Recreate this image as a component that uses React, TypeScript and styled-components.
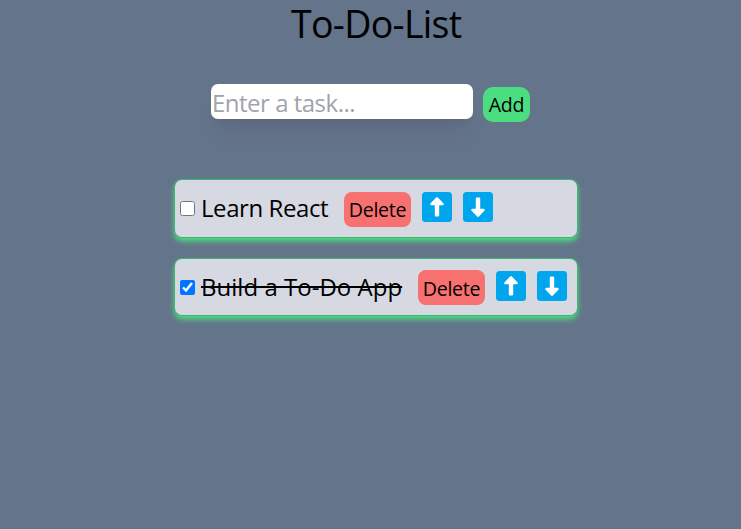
import React, { useState } from "react";
import styled, { createGlobalStyle } from "styled-components";

const GlobalStyle = createGlobalStyle`
  *, *::before, *::after { box-sizing: border-box; }
  html, body { margin: 0; min-height: 100vh; background: #64748b; }
  body { font-family: "Segoe UI", "Open Sans", "Noto Sans", sans-serif; color: #000; }
  button, input { font: inherit; color: inherit; border: 0; margin: 0; padding: 0; }
`;

const Page = styled.main`
  display: flex;
  flex-direction: column;
  width: 741px;
  height: 529px;
`;

const Title = styled.h1`
  margin: 0 0 0 291px;
  height: 84px;
  font-size: 37.5px;
  font-weight: 400;
  line-height: 48px;
  letter-spacing: -0.7px;
  white-space: nowrap;
`;

const EntryRow = styled.form`
  display: flex;
  align-items: flex-start;
  gap: 10px;
  height: 96px;
  padding-left: 211px;
`;

const TaskInput = styled.input`
  width: 262px;
  height: 35px;
  padding: 1px 1px 0;
  font-size: 24px;
  letter-spacing: -0.5px;
  border-radius: 7px;
  background: #fff;
  outline: none;
  box-shadow: 0 20px 25px -5px rgba(0, 0, 0, 0.06), 0 8px 10px -6px rgba(0, 0, 0, 0.08);
  &::placeholder { color: #a0a4aa; opacity: 1; }
`;

const Button = styled.button<{ $tone: "add" | "delete"; $drop?: number }>`
  flex: none;
  width: ${(p) => (p.$tone === "add" ? 47 : 67)}px;
  height: 35px;
  padding-top: ${(p) => p.$drop ?? 0}px;
  margin-top: ${(p) => (p.$tone === "add" ? 3 : 0)}px;
  font-size: 19.6px;
  line-height: ${(p) => 35 - (p.$drop ?? 0)}px;
  letter-spacing: -0.25px;
  white-space: nowrap;
  border-radius: ${(p) => (p.$tone === "add" ? 10 : 8)}px;
  background: ${(p) => (p.$tone === "add" ? "#4ade80" : "#f87171")};
`;

const List = styled.ul`
  display: flex;
  flex-direction: column;
  gap: 22px;
  margin: 0 0 0 175px;
  padding: 0;
  width: 402px;
  list-style: none;
`;

const Card = styled.li<{ $done: boolean }>`
  display: flex;
  align-items: flex-start;
  height: ${(p) => (p.$done ? 56 : 57)}px;
  padding: ${(p) => (p.$done ? 11 : 12)}px 0 0 5px;
  border-radius: 7px;
  background: #d6d9e2;
  box-shadow: 0 0 0 1px #3fb574, 0 4px 6px 0 #4ade80, 0 2px 4px -1px #4ade80;
`;

const Check = styled.input<{ $done: boolean }>`
  flex: none;
  width: 15px;
  height: 15px;
  margin: ${(p) => (p.$done ? 10 : 9)}px 6px 0 0;
`;

const Label = styled.span<{ $done: boolean; $width: number }>`
  flex: none;
  width: ${(p) => p.$width}px;
  margin-right: 16px;
  font-size: 24px;
  line-height: ${(p) => (p.$done ? 34 : 32)}px;
  letter-spacing: ${(p) => (p.$done ? 0.02 : -0.42)}px;
  white-space: nowrap;
  text-decoration: ${(p) => (p.$done ? "line-through" : "none")};
  text-decoration-thickness: 2px;
`;

const Moves = styled.div<{ $done: boolean }>`
  display: flex;
  gap: 11px;
  margin: ${(p) => (p.$done ? 0.7 : 0)}px 0 0 10.5px;
`;

const MoveButton = styled.button`
  width: 30px;
  height: 30px;
  background: none;
  svg { display: block; }
`;

function Arrow({ down = false }: { down?: boolean }) {
  return (
    <svg width="30" height="30" viewBox="0 0 30 30">
      <rect width="30" height="30" rx="3.5" fill="#00a6ed" />
      <path
        transform={down ? "rotate(180 15 15)" : undefined}
        d="M14.1 5.500a1.300 1.300 0 0 1 1.800 0l5.500 5.700c.8.900.3 2.100-.9 2.100H17.200v10.100c0 .7-.5 1.200-1.200 1.200h-2c-.7 0-1.200-.5-1.200-1.200v-10.100H9.500c-1.200 0-1.700-1.200-.9-2.100z"
        fill="#fff"
      />
    </svg>
  );
}

const initialTasks = [
  { text: "Learn React", done: false, width: 127 },
  { text: "Build a To-Do App", done: true, width: 201 },
];

export default function App() {
  const [tasks, setTasks] = useState(initialTasks);
  const toggle = (text: string) =>
    setTasks(tasks.map((t) => (t.text === text ? { ...t, done: !t.done } : t)));
  return (
    <Page>
      <GlobalStyle />
      <Title>To-Do-List</Title>
      <EntryRow onSubmit={(e) => e.preventDefault()}>
        <TaskInput placeholder="Enter a task..." />
        <Button $tone="add">Add</Button>
      </EntryRow>
      <List>
        {tasks.map((t) => (
          <Card key={t.text} $done={t.done}>
            <Check type="checkbox" $done={t.done} checked={t.done} onChange={() => toggle(t.text)} />
            <Label $done={t.done} $width={t.width}>{t.text}</Label>
            <Button $tone="delete" type="button" $drop={t.done ? 2 : 0}>Delete</Button>
            <Moves $done={t.done}>
              <MoveButton type="button" aria-label="Move up"><Arrow /></MoveButton>
              <MoveButton type="button" aria-label="Move down"><Arrow down /></MoveButton>
            </Moves>
          </Card>
        ))}
      </List>
    </Page>
  );
}
